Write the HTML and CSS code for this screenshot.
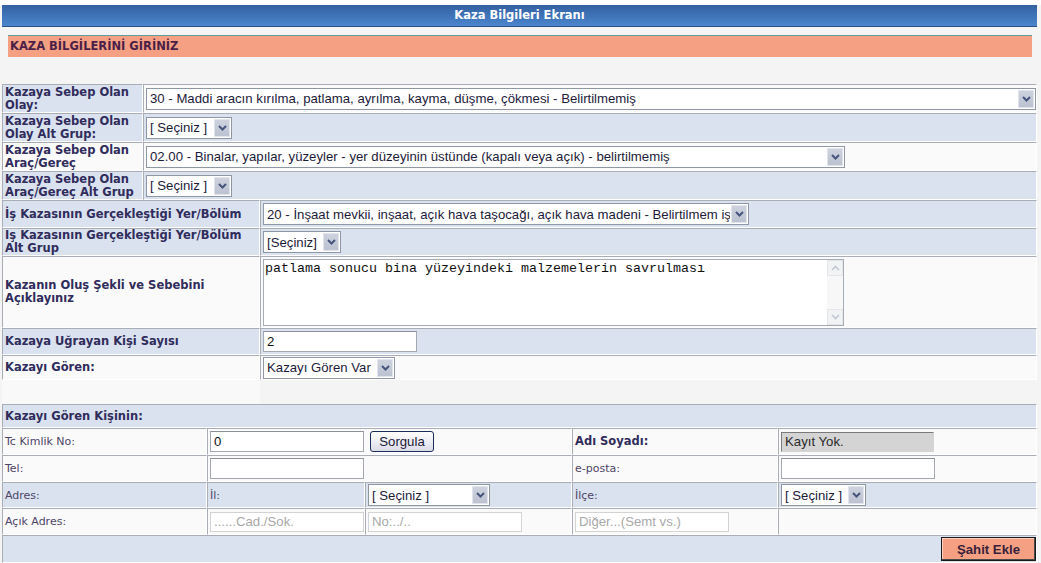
FILE: index.html
```html
<!DOCTYPE html>
<html lang="tr">
<head>
<meta charset="utf-8">
<title>Kaza Bilgileri Ekranı</title>
<link rel="stylesheet" href="styles.css">
</head>
<body>
<div class="page">
  <div class="titlebar">Kaza Bilgileri Ekranı</div>
  <div class="section-head">KAZA BİLGİLERİNİ GİRİNİZ</div>

  <table class="form t1">
    <colgroup><col class="c141"><col></colgroup>
    <tr class="r29">
      <td class="lbl bl">Kazaya Sebep Olan<br>Olay:</td>
      <td class="wh"><span class="sel w890"><select><option>30 - Maddi aracın kırılma, patlama, ayrılma, kayma, düşme, çökmesi - Belirtilmemiş</option></select><span class="arr"><svg viewBox="0 0 9 6" width="9" height="6"><path d="M1 1l3.5 3.5L8 1"/></svg></span></span></td>
    </tr>
    <tr class="r29">
      <td class="lbl bl">Kazaya Sebep Olan<br>Olay Alt Grup:</td>
      <td class="bl"><span class="sel w86"><select><option>[ Seçiniz ]</option></select><span class="arr"><svg viewBox="0 0 9 6" width="9" height="6"><path d="M1 1l3.5 3.5L8 1"/></svg></span></span></td>
    </tr>
    <tr class="r29">
      <td class="lbl wh">Kazaya Sebep Olan<br>Araç/Gereç</td>
      <td class="wh"><span class="sel w699"><select><option>02.00 - Binalar, yapılar, yüzeyler - yer düzeyinin üstünde (kapalı veya açık) - belirtilmemiş</option></select><span class="arr"><svg viewBox="0 0 9 6" width="9" height="6"><path d="M1 1l3.5 3.5L8 1"/></svg></span></span></td>
    </tr>
    <tr class="r29">
      <td class="lbl bl">Kazaya Sebep Olan<br>Araç/Gereç Alt Grup</td>
      <td class="bl"><span class="sel w86"><select><option>[ Seçiniz ]</option></select><span class="arr"><svg viewBox="0 0 9 6" width="9" height="6"><path d="M1 1l3.5 3.5L8 1"/></svg></span></span></td>
    </tr>
  </table>

  <table class="form t2">
    <colgroup><col class="c258"><col></colgroup>
    <tr class="r28">
      <td class="lbl bl">İş Kazasının Gerçekleştiği Yer/Bölüm</td>
      <td class="bl"><span class="sel w485"><select><option>20 - İnşaat mevkii, inşaat, açık hava taşocağı, açık hava madeni - Belirtilmem iş</option></select><span class="arr"><svg viewBox="0 0 9 6" width="9" height="6"><path d="M1 1l3.5 3.5L8 1"/></svg></span></span></td>
    </tr>
    <tr class="r28">
      <td class="lbl bl">İş Kazasının Gerçekleştiği Yer/Bölüm<br>Alt Grup</td>
      <td class="bl"><span class="sel w78"><select><option>[Seçiniz]</option></select><span class="arr"><svg viewBox="0 0 9 6" width="9" height="6"><path d="M1 1l3.5 3.5L8 1"/></svg></span></span></td>
    </tr>
    <tr class="r72">
      <td class="lbl wh">Kazanın Oluş Şekli ve Sebebini<br>Açıklayınız</td>
      <td class="wh">
        <div class="ta">
          <textarea>patlama sonucu bina yüzeyindeki malzemelerin savrulması</textarea>
          <div class="sbar">
            <span class="sbtn"><svg viewBox="0 0 9 6" width="9" height="6"><path d="M1 5l3.5-3.5L8 5"/></svg></span>
            <span class="strack"></span>
            <span class="sbtn"><svg viewBox="0 0 9 6" width="9" height="6"><path d="M1 1l3.5 3.5L8 1"/></svg></span>
          </div>
        </div>
      </td>
    </tr>
    <tr class="r27">
      <td class="lbl bl">Kazaya Uğrayan Kişi Sayısı</td>
      <td class="bl"><input class="inp" type="text" value="2"></td>
    </tr>
    <tr class="r25">
      <td class="lbl wh">Kazayı Gören:</td>
      <td class="wh"><span class="sel w132"><select><option>Kazayı Gören Var</option></select><span class="arr"><svg viewBox="0 0 9 6" width="9" height="6"><path d="M1 1l3.5 3.5L8 1"/></svg></span></span></td>
    </tr>
    <tr class="spacer">
      <td class="sp-left"></td>
      <td class="sp-right"></td>
    </tr>
  </table>

  <table class="form t3">
    <colgroup><col class="c205"><col class="c158"><col class="c207"><col class="c206"><col></colgroup>
    <tr class="r24">
      <td class="lbl bl" colspan="5">Kazayı Gören Kişinin:</td>
    </tr>
    <tr class="r27">
      <td class="nl wh">Tc Kimlik No:</td>
      <td class="wh" colspan="2"><input class="inp" type="text" value="0"><button class="btn" type="button">Sorgula</button></td>
      <td class="lbl wh">Adı Soyadı:</td>
      <td class="wh"><span class="ro">Kayıt Yok.</span></td>
    </tr>
    <tr class="r27">
      <td class="nl wh">Tel:</td>
      <td class="wh" colspan="2"><input class="inp" type="text" value=""></td>
      <td class="nl wh">e-posta:</td>
      <td class="wh"><input class="inp" type="text" value=""></td>
    </tr>
    <tr class="r26">
      <td class="nl bl">Adres:</td>
      <td class="nl bl">İl:</td>
      <td class="bl"><span class="sel w122"><select><option>[ Seçiniz ]</option></select><span class="arr"><svg viewBox="0 0 9 6" width="9" height="6"><path d="M1 1l3.5 3.5L8 1"/></svg></span></span></td>
      <td class="nl bl">İlçe:</td>
      <td class="bl"><span class="sel w85"><select><option>[ Seçiniz ]</option></select><span class="arr"><svg viewBox="0 0 9 6" width="9" height="6"><path d="M1 1l3.5 3.5L8 1"/></svg></span></span></td>
    </tr>
    <tr class="r27">
      <td class="nl wh">Açık Adres:</td>
      <td class="wh"><input class="inp ph" type="text" placeholder="......Cad./Sok."></td>
      <td class="wh"><input class="inp ph" type="text" placeholder="No:../.."></td>
      <td class="wh"><input class="inp ph" type="text" placeholder="Diğer...(Semt vs.)"></td>
      <td class="wh"></td>
    </tr>
    <tr class="r28">
      <td class="bl act" colspan="5"><button class="save" type="button">Şahit Ekle</button></td>
    </tr>
  </table>
</div>
</body>
</html>
```

FILE: styles.css
```css
* { box-sizing: border-box; }

body {
  margin: 0;
  border-top: 5px solid #ffffff;
  background: #f4f4f4;
  font-family: "DejaVu Sans", Verdana, sans-serif;
}

.page {
  width: 1035px;
  margin-left: 2px;
}

.titlebar {
  height: 22px;
  background: linear-gradient(#3361a1, #4b85cd);
  border-bottom: 1px solid #2c4f85;
  color: #ffffff;
  font-weight: bold;
  font-size: 11.5px;
  line-height: 21px;
  text-align: center;
}

.section-head {
  margin: 8px 5px 27px 6px;
  height: 22px;
  border-top: 1px solid #5f9c9c;
  background: #f6a083;
  color: #4b1f47;
  font-weight: bold;
  font-size: 11.5px;
  line-height: 21px;
  padding-left: 2px;
}

table.form {
  width: 100%;
  border-collapse: separate;
  border-spacing: 0;
  table-layout: fixed;
}

.form td {
  border: 1px solid;
  border-color: #a9aeb6 #ffffff #ffffff #a9aeb6;
  padding: 0 2px;
  vertical-align: middle;
  overflow: hidden;
}

.t1 td + td { padding-right: 0; }

.c141 { width: 141px; }
.c258 { width: 258px; }
.c205 { width: 205px; }
.c158 { width: 158px; }
.c207 { width: 207px; }
.c206 { width: 206px; }

.r24 { height: 24px; }
.r25 { height: 25px; }
.r26 { height: 26px; }
.r27 { height: 27px; }
.r28 { height: 28px; }
.r29 { height: 29px; }
.r72 { height: 72px; }

.form td.bl { background: #dae2ef; }
.form td.wh { background: #fafafa; }

.lbl {
  font-weight: bold;
  font-size: 11.5px;
  line-height: 13px;
  color: #302c5c;
  white-space: nowrap;
}

.nl {
  font-size: 11px;
  color: #4d4566;
  white-space: nowrap;
}

/* spacer row */
.spacer { height: 24px; }
.form td.sp-left { border: 0; background: #f9f9f9; }
.form td.sp-right { border: 0; background: transparent; }

/* select imitation */
.sel {
  display: inline-flex;
  vertical-align: middle;
  height: 22px;
  border: 1px solid #8f97a5;
  background: #ffffff;
}

.sel select {
  -webkit-appearance: none;
  appearance: none;
  flex: 1;
  min-width: 0;
  height: 100%;
  border: 0;
  outline: none;
  background: transparent;
  padding: 0 0 0 3px;
  font: 13.2px "Liberation Sans", Arial, sans-serif;
  color: #1d1b3a;
}

.sel .arr {
  flex: none;
  width: 16px;
  margin: 1px;
  border: 1px solid #e1e4eb;
  background: linear-gradient(#cdd2de, #bcc2d1);
  display: flex;
  align-items: center;
  justify-content: center;
}

.arr path {
  fill: none;
  stroke: #45557c;
  stroke-width: 2;
}

.w890 { width: 890px; }
.w86 { width: 86px; }
.w699 { width: 699px; }
.w485 { width: 486px; }
.w78 { width: 78px; }
.w132 { width: 132px; }
.w122 { width: 122px; }
.w85 { width: 85px; }

/* textarea */
.ta {
  display: flex;
  width: 581px;
  height: 67px;
  border: 1px solid #a5acb5;
  background: #ffffff;
}

.ta textarea {
  flex: 1;
  border: 0;
  outline: none;
  resize: none;
  overflow: hidden;
  padding: 1px 1px;
  font: 13.33px "Liberation Mono", "Courier New", monospace;
  color: #111111;
  background: #ffffff;
}

.sbar {
  flex: none;
  width: 16px;
  display: flex;
  flex-direction: column;
  background: #f7f7f7;
}

.sbtn {
  height: 16px;
  border: 1px solid #e4e6ea;
  background: #f2f3f5;
  display: flex;
  align-items: center;
  justify-content: center;
}

.sbtn path {
  fill: none;
  stroke: #c3c8d2;
  stroke-width: 1.6;
}

.strack { flex: 1; }

/* inputs */
.inp {
  width: 154px;
  height: 21px;
  vertical-align: middle;
  border: 1px solid #a4a9b1;
  border-top-color: #8b9099;
  background: #ffffff;
  padding: 0 3px;
  font: 13.2px "Liberation Sans", Arial, sans-serif;
  color: #111111;
}

.inp.ph {
  height: 20px;
  border-color: #d3d3d3;
}

.inp.ph::placeholder { color: #a9a9a9; }

.ro {
  display: inline-block;
  width: 153px;
  height: 20px;
  vertical-align: middle;
  border: 1px solid;
  border-color: #7a7a7a #d4d4d4 #d4d4d4 #7a7a7a;
  background: #d4d4d4;
  padding: 1px 3px 0;
  font: 13.2px "Liberation Sans", Arial, sans-serif;
  color: #2a2a2a;
}

.btn {
  width: 64px;
  height: 21px;
  margin-left: 6px;
  padding: 0;
  vertical-align: middle;
  border: 1px solid #1d2d5a;
  border-radius: 3px;
  background: linear-gradient(#ffffff, #dcdce8);
  font: 13.2px "Liberation Sans", Arial, sans-serif;
  color: #1a1a3a;
}

.form td.act {
  text-align: right;
  padding: 0;
}

.save {
  width: 95px;
  height: 24px;
  vertical-align: middle;
  padding: 0;
  border: 1px solid #1a1a1a;
  box-shadow: inset -1px -1px 0 #4a4a4a, inset 1px 1px 0 #fcd2c2;
  background: #f6a083;
  font: bold 13.2px "Liberation Sans", Arial, sans-serif;
  color: #3a1f3a;
}
```
